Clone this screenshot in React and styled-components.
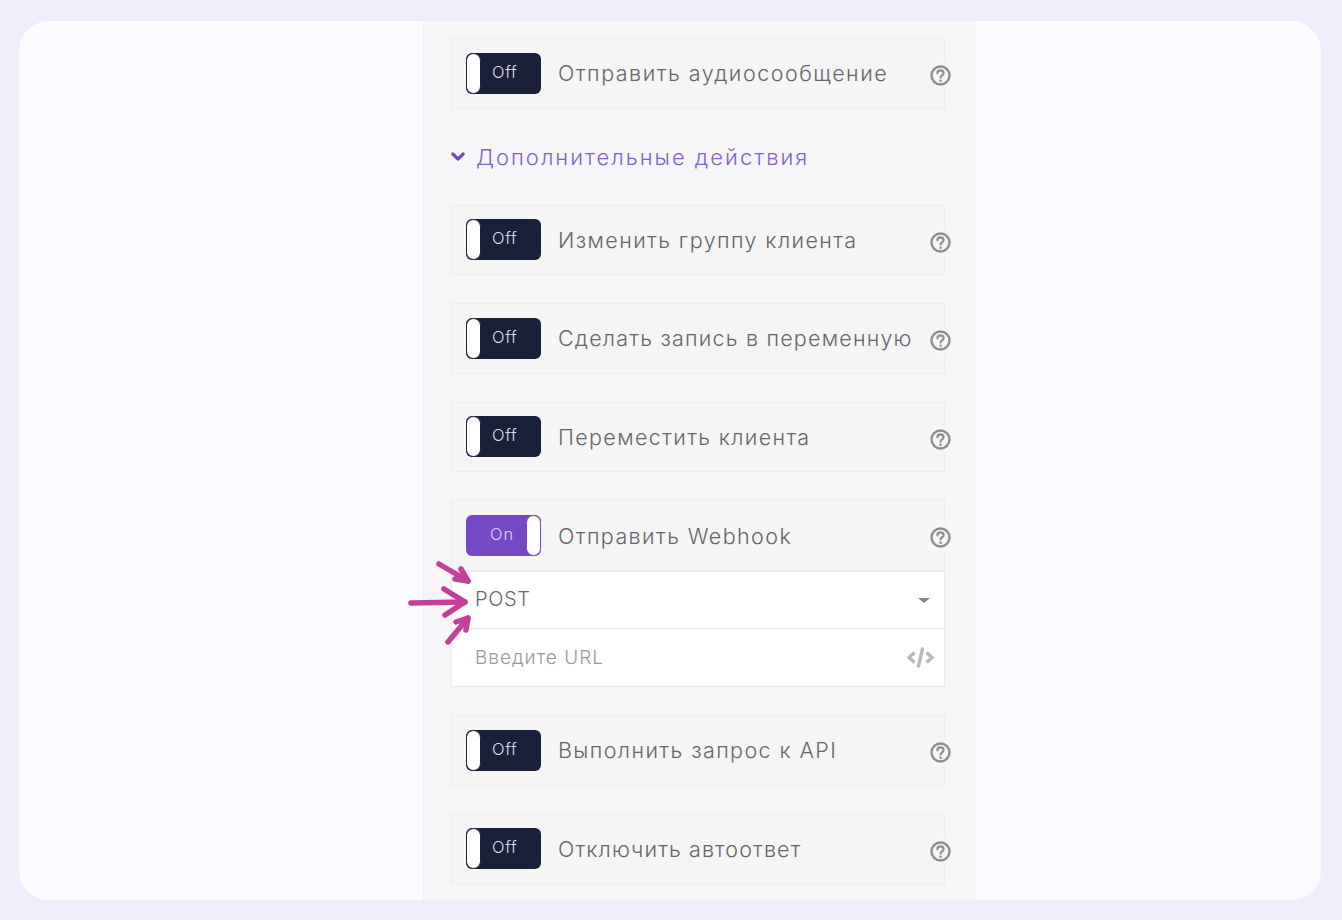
import React from "react";
import styled, { createGlobalStyle } from "styled-components";

const GlobalStyle = createGlobalStyle`
  html, body {
    margin: 0;
    padding: 0;
    background: #f0edfa;
    font-family: "Inter", "Open Sans", "Liberation Sans", sans-serif;
  }
`;

const Page = styled.div`
  box-sizing: border-box;
  width: 1342px;
  height: 920px;
  padding: 21px 21px 20px 19px;
`;

const Card = styled.div`
  box-sizing: border-box;
  height: 100%;
  padding-left: 404px;
  border-radius: 30px;
  background: #fafbff;
  overflow: hidden;
  display: flex;
`;

const Panel = styled.div`
  box-sizing: border-box;
  width: 552px;
  height: 100%;
  padding: 16.5px 29px 0 27px;
  background: #f6f6f8;
  border-left: 1px solid #f0f0f3;
  border-right: 1px solid #f0f0f3;
  display: flex;
  flex-direction: column;
  gap: 28px;
`;

const Block = styled.div`
  position: relative;
  box-sizing: border-box;
  width: 494px;
`;

const Row = styled.div`
  box-sizing: border-box;
  height: ${p => p.$height || 70.5}px;
  display: flex;
  align-items: center;
  gap: 17px;
  padding: 0 0 0 14px;
  background: #f5f5f6;
  border: 1px solid #ececee;
`;

const Toggle = styled.div`
  box-sizing: border-box;
  flex: none;
  width: 75px;
  height: 41px;
  border-radius: 6px;
  display: flex;
  flex-direction: ${p => (p.$on ? "row-reverse" : "row")};
  align-items: stretch;
  background: ${p => (p.$on ? "#7549c6" : "#1a2039")};
`;

const Knob = styled.span`
  box-sizing: border-box;
  flex: none;
  width: 15px;
  background: #fff;
  border-radius: 8px;
  border: 1px solid ${p => (p.$on ? "#7549c6" : "#1a2039")};
`;

const ToggleText = styled.span`
  flex: 1;
  padding-left: ${p => (p.$on ? 24 : 11)}px;
  font-size: 16.5px;
  font-weight: 300;
  letter-spacing: ${p => (p.$on ? 1 : 0.7)}px;
  line-height: 39px;
  color: ${p => (p.$on ? "#dcd3f3" : "#dfdfe6")};
`;

const Label = styled.span`
  font-size: 21.5px;
  font-weight: 300;
  letter-spacing: ${p => p.$spacing || 1.4}px;
  color: #666668;
  white-space: nowrap;
`;

const Help = styled.span`
  position: absolute;
  right: -6px;
  top: 27px;
  width: 21px;
  height: 21px;
  border-radius: 50%;
  box-shadow: 0 0 0 4px #f6f6f8;
  background: #f6f6f8;
  display: flex;
`;

const Section = styled.div`
  display: flex;
  align-items: center;
  gap: 11px;
  height: 40px;
`;

const SectionTitle = styled.span`
  font-size: 22px;
  font-weight: 300;
  letter-spacing: 2px;
  color: #8460cf;
  white-space: nowrap;
`;

const Field = styled.div`
  box-sizing: border-box;
  height: ${p => p.$height}px;
  display: flex;
  align-items: center;
  justify-content: space-between;
  padding: 0 10px 0 23px;
  background: #fff;
  border: 1px solid #e9e9ec;
  border-top: ${p => (p.$first ? "1px solid #ececef" : "none")};
`;

const FieldText = styled.span`
  position: relative;
  top: ${p => (p.$muted ? 0 : -1.5)}px;
  font-size: ${p => (p.$muted ? 19 : 20)}px;
  font-weight: 300;
  letter-spacing: ${p => (p.$muted ? 1 : 0.6)}px;
  color: ${p => (p.$muted ? "#999" : "#666")};
`;

const Caret = styled.span`
  width: 0;
  height: 0;
  margin-right: 4px;
  border-left: 6px solid transparent;
  border-right: 6px solid transparent;
  border-top: 5px solid #85858a;
`;

const Arrows = styled.svg`
  position: absolute;
  left: -46px;
  top: 55.5px;
  pointer-events: none;
`;

const HelpIcon = () => (
  <svg width="21" height="21" viewBox="0 0 21 21" fill="none">
    <circle cx="10.5" cy="10.5" r="9" stroke="#8f8f92" strokeWidth="2.4" />
    <path
      d="M7.4 8.3c0-1.8 1.4-2.9 3.1-2.9s3.1 1.1 3.1 2.7c0 2.4-3 2.3-3 4.5"
      stroke="#8f8f92"
      strokeWidth="2.2"
      strokeLinecap="round"
    />
    <circle cx="10.6" cy="15.8" r="1.3" fill="#8f8f92" />
  </svg>
);

const Chevron = () => (
  <svg width="14" height="10" viewBox="0 0 14 10" fill="none">
    <path d="M1.8 2l5.2 5 5.2-5" stroke="#7549c6" strokeWidth="3.2" strokeLinecap="round" strokeLinejoin="round" />
  </svg>
);

const CodeIcon = () => (
  <svg width="27" height="21" viewBox="0 0 27 21" fill="none" stroke="#b9b9bc" strokeWidth="3.4">
    <path d="M7.5 5.5L2 10.5l5.5 5" />
    <path d="M19.5 5.5l5.5 5-5.5 5" />
    <path d="M15.5 2l-4 17" strokeLinecap="round" />
  </svg>
);

const Switch = ({ on }) => (
  <Toggle $on={on}>
    <Knob $on={on} />
    <ToggleText $on={on}>{on ? "On" : "Off"}</ToggleText>
  </Toggle>
);

const ActionRow = ({ label, height, spacing }) => (
  <Block>
    <Row $height={height}>
      <Switch />
      <Label $spacing={spacing}>{label}</Label>
    </Row>
    <Help>
      <HelpIcon />
    </Help>
  </Block>
);

export default function App() {
  return (
    <Page>
      <GlobalStyle />
      <Card>
        <Panel>
          <ActionRow label="Отправить аудиосообщение" height={71} spacing={1.5} />
          <Section>
            <Chevron />
            <SectionTitle>Дополнительные действия</SectionTitle>
          </Section>
          <ActionRow label="Изменить группу клиента" />
          <ActionRow label="Сделать запись в переменную" spacing={1.2} />
          <ActionRow label="Переместить клиента" spacing={1.35} />
          <Block>
            <Row $height={71}>
              <Switch on />
              <Label>Отправить Webhook</Label>
            </Row>
            <Field $first $height={58}>
              <FieldText>POST</FieldText>
              <Caret />
            </Field>
            <Field $height={58}>
              <FieldText $muted>Введите URL</FieldText>
              <CodeIcon />
            </Field>
            <Help>
              <HelpIcon />
            </Help>
            <Arrows width="70" height="93" viewBox="405 555 70 93" fill="none" stroke="#c2409a" strokeWidth="5.5" strokeLinecap="round" strokeLinejoin="round">
              <path d="M439 563l29 17" />
              <path d="M461 568l7 12-13-2" />
              <path d="M411 602l54-1" />
              <path d="M444 588l21 13-20 13" />
              <path d="M448 641l20-24" />
              <path d="M456 621l12-4-2 12" />
            </Arrows>
          </Block>
          <ActionRow label="Выполнить запрос к API" />
          <ActionRow label="Отключить автоответ" spacing={1.1} />
        </Panel>
      </Card>
    </Page>
  );
}
